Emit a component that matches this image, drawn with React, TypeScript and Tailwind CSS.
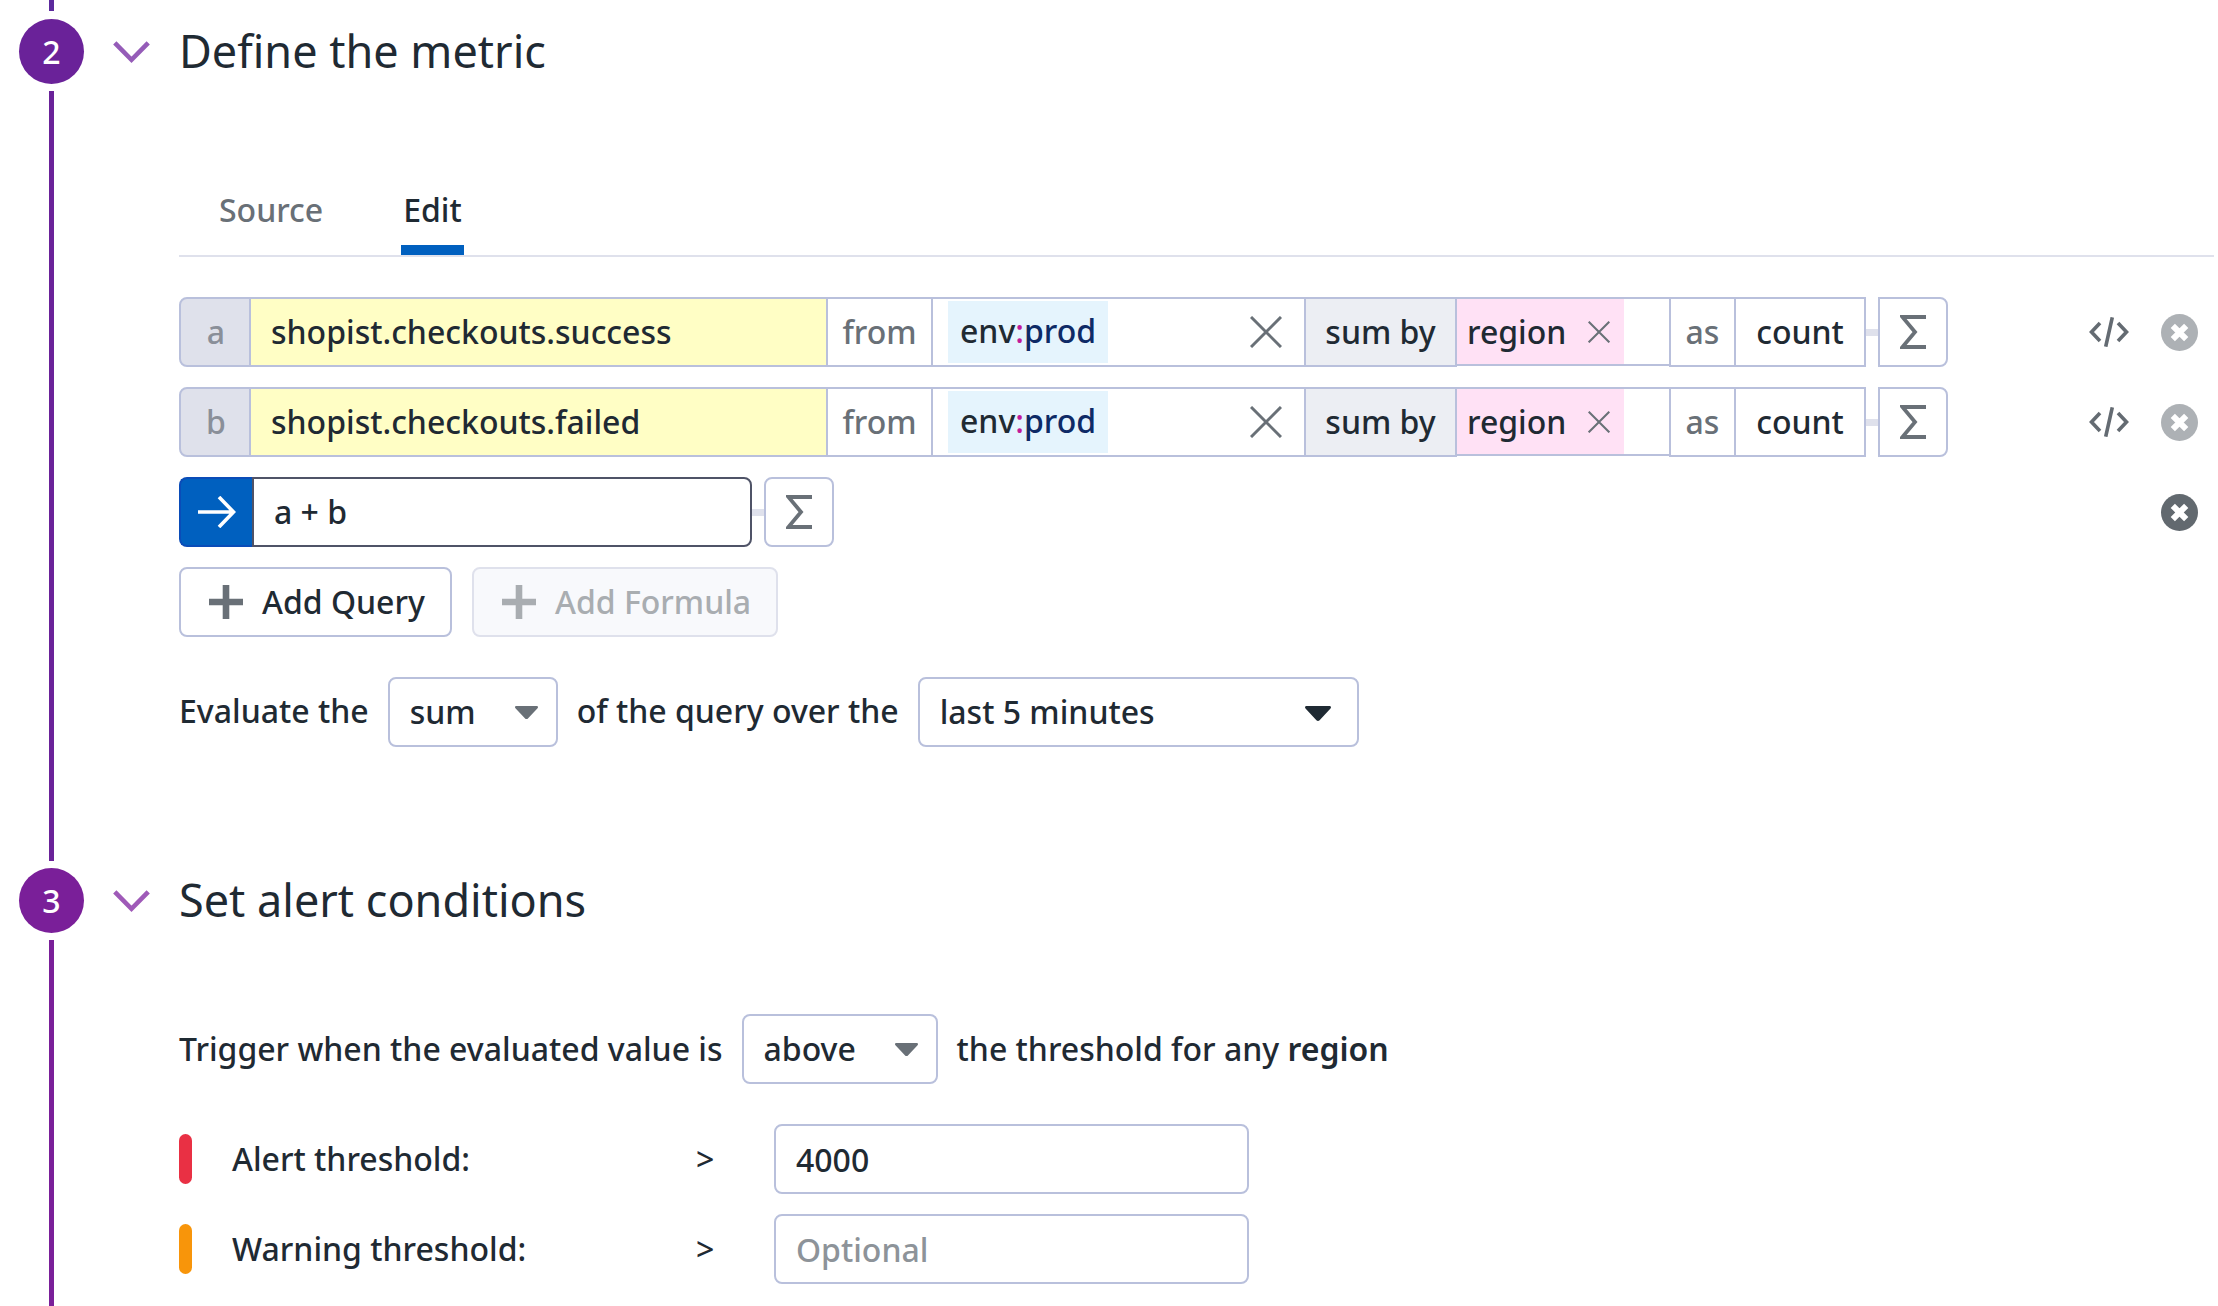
import React, { useState } from "react";

const CELL = "flex h-[70px] shrink-0 items-center border-2 border-[#b9c0dc] bg-white";

function Chevron({ className }: { className: string }) {
  return (
    <svg width="37" height="23" viewBox="0 0 37 23" fill="none" className={className} aria-hidden="true">
      <path d="M1.8 1.8 18.5 18.8 35.2 1.8" stroke="currentColor" strokeWidth="4.6" />
    </svg>
  );
}

function Sigma() {
  return (
    <svg width="26" height="34" viewBox="0 0 26 34" fill="none" aria-hidden="true">
      <path d="M26 2H2.400L15 17 2.400 32H26" stroke="#697077" strokeWidth="3.800" />
    </svg>
  );
}

function Cross({ size, width }: { size: number; width: number }) {
  return (
    <svg width={size} height={size} viewBox="0 0 32 32" fill="none" aria-hidden="true">
      <path d="M1 1 31 31M31 1 1 31" stroke="#697077" strokeWidth={width} />
    </svg>
  );
}

function Plus() {
  return (
    <svg width="34" height="34" viewBox="0 0 34 34" aria-hidden="true">
      <path d="M13.7 0h6.6v13.7H34v6.6H20.3V34h-6.6V20.3H0v-6.6h13.7z" fill="currentColor" />
    </svg>
  );
}

function Caret({ className, width }: { className: string; width: number }) {
  return (
    <svg width={width} viewBox="0 0 26 15" className={className} aria-hidden="true">
      <path d="M1.6 0h22.8c1.5 0 2.1 1.4 1.1 2.5L14.6 14.2c-.9 1-2.3 1-3.2 0L.5 2.500C-.5 1.400.100 0 1.600 0z" fill="currentColor" />
    </svg>
  );
}

function RemoveButton({ label, className }: { label: string; className: string }) {
  return (
    <button type="button" aria-label={label} className={className}>
      <svg width="37" height="37" viewBox="0 0 37 37" aria-hidden="true">
        <circle cx="18.5" cy="18.5" r="18.5" fill="currentColor" />
        <path d="M11.800 11.800 25.200 25.200M25.200 11.800 11.800 25.200" stroke="#fff" strokeWidth="6" />
      </svg>
    </button>
  );
}

function CodeIcon() {
  return (
    <svg width="40" height="30" viewBox="0 0 40 30" fill="none" stroke="#646b72" strokeWidth="3.600" aria-hidden="true">
      <path d="M11 6 2.500 15 11 24M29 6 37.500 15 29 24M23.300.300 16.700 29.700" />
    </svg>
  );
}

function Connector() {
  return <span className="h-[7px] w-3 shrink-0 bg-[#dfe1ec]" />;
}

function SelectBox(props: {
  label: string;
  options: string[];
  className: string;
  caretClass: string;
  caretWidth: number;
}) {
  return (
    <div className={`relative ${props.className}`}>
      <select
        aria-label={props.label}
        className="h-[70px] w-full appearance-none rounded-lg border-2 border-[#b9c0dc] bg-white pl-5 pr-14"
      >
        {props.options.map((o) => (
          <option key={o}>{o}</option>
        ))}
      </select>
      <Caret className={`pointer-events-none absolute top-[29px] ${props.caretClass}`} width={props.caretWidth} />
    </div>
  );
}

function QueryRow({ id, metric }: { id: string; metric: string }) {
  const [value, setValue] = useState(metric);
  return (
    <div className="flex items-center">
      <span className="flex h-[70px] w-[72px] shrink-0 items-center justify-center rounded-l-lg border-2 border-[#b9c0dc] bg-[#dfe1eb] pl-0.5 text-[#8a8f99]">
        {id}
      </span>
      <input
        aria-label={`Metric ${id}`}
        value={value}
        onChange={(e) => setValue(e.target.value)}
        className="h-[70px] w-[575px] shrink-0 border-y-2 border-[#b9c0dc] bg-[#fffec5] pb-0.5 pl-5"
      />
      <span className={`${CELL} w-[107px] justify-center text-[#697077]`}>from</span>
      <div className={`${CELL} w-[373px] justify-between border-l-0 pr-[22px] pl-[15px]`}>
        <span className="flex h-[62px] items-center bg-[#e5f4fd] px-3 pb-0.5">
          env<span className="text-[#c2189b]">:</span>
          <span className="text-[#0e2a66]">prod</span>
        </span>
        <button type="button" aria-label={`Clear filter ${id}`}>
          <Cross size={32} width={3} />
        </button>
      </div>
      <button type="button" className="h-[70px] w-[151px] shrink-0 border-y-2 border-r-2 border-[#b9c0dc] bg-[#eceef3]">
        sum by
      </button>
      <div className="flex h-[69px] w-[212px] shrink-0 self-start border-y-2 border-[#b9c0dc]">
        <span className="flex w-[167px] items-center justify-between bg-[#ffe1f5] pr-[14px] pl-[10px]">
          region
          <button type="button" aria-label={`Remove region ${id}`}>
            <Cross size={22} width={3} />
          </button>
        </span>
      </div>
      <span className={`${CELL} w-[67px] justify-center text-[#697077]`}>as</span>
      <button type="button" className={`${CELL} w-[130px] justify-center border-l-0`}>
        count
      </button>
      <Connector />
      <button type="button" aria-label={`Add function ${id}`} className={`${CELL} w-[70px] justify-center rounded-r-lg`}>
        <Sigma />
      </button>
      <div className="ml-auto flex items-center gap-8 pr-4">
        <button type="button" aria-label={`Show code ${id}`}>
          <CodeIcon />
        </button>
        <RemoveButton label={`Remove query ${id}`} className="text-[#adb1b5]" />
      </div>
    </div>
  );
}

function ThresholdRow(props: { id: string; label: string; bar: string; value?: string; placeholder?: string }) {
  return (
    <div className="flex items-center">
      <span className={`h-[50px] w-[13px] shrink-0 rounded-full ${props.bar}`} />
      <label htmlFor={props.id} className="ml-10 w-[464px] shrink-0">
        {props.label}
      </label>
      <span className="w-[78px] shrink-0">&gt;</span>
      <input
        id={props.id}
        defaultValue={props.value}
        placeholder={props.placeholder}
        className="h-[70px] w-[475px] rounded-lg border-2 border-[#b9c0dc] bg-white px-5 placeholder:text-[#8d9399]"
      />
    </div>
  );
}

function Step(props: {
  number: number;
  title: string;
  circle: string;
  line: string;
  chevron: string;
  lead?: React.ReactNode;
  className: string;
  children: React.ReactNode;
}) {
  return (
    <section className={`flex ${props.className}`}>
      <div className="flex w-[103px] shrink-0 flex-col items-center">
        {props.lead}
        <div className={`flex h-[65px] w-[65px] shrink-0 items-center justify-center rounded-full text-white ${props.circle}`}>
          {props.number}
        </div>
        <div className={`mt-[7px] w-[5px] flex-1 ${props.line}`} />
      </div>
      <div className="min-w-0 flex-1">
        {props.lead && <div className="h-[19px]" />}
        <div className="flex h-[65px] items-center">
          <button type="button" aria-label={`Collapse ${props.title}`} className="w-[76px] pt-0.5 pl-2.5">
            <Chevron className={props.chevron} />
          </button>
          <h2 className="pb-0.5 text-[45px] leading-[60px] font-normal">{props.title}</h2>
        </div>
        <div className="pr-1 pl-[76px]">{props.children}</div>
      </div>
    </section>
  );
}

export default function App() {
  const [formula, setFormula] = useState("a + b");
  return (
    <main className="flex min-h-screen flex-col bg-white font-['Noto_Sans',sans-serif] text-[32px] leading-[44px] font-medium whitespace-nowrap text-[#1f2a33]">
      <Step
        number={2}
        title="Define the metric"
        circle="bg-[#6a2299]"
        line="bg-[#6a2299]"
        chevron="text-[#955cb8]"
        lead={<div className="mb-2 h-[11px] w-[5px] bg-[#5c2a9d]" />}
        className=""
      >
        <nav className="mt-[104px] flex gap-[78px] border-b-2 border-[#dfe1ec] pl-10">
          <button type="button" className="border-b-[10px] border-transparent pb-[13px] text-[#697077]">
            Source
          </button>
          <button type="button" className="border-b-[10px] border-[#0060bf] px-0.5 pb-[13px]">
            Edit
          </button>
        </nav>
        <div className="mt-10 flex flex-col gap-5">
          <QueryRow id="a" metric="shopist.checkouts.success" />
          <QueryRow id="b" metric="shopist.checkouts.failed" />
          <div className="flex items-center">
            <button
              type="button"
              aria-label="Apply formula"
              className="flex h-[70px] w-[73px] shrink-0 items-center justify-center rounded-l-lg border-y-2 border-l-2 border-[#0a4cb8] bg-[#0060bf]"
            >
              <svg width="38" height="32" viewBox="0 0 38 32" fill="none" stroke="#fff" strokeWidth="3.600" aria-hidden="true">
                <path d="M0 16H36M21 1 35.500 16 21 31" />
              </svg>
            </button>
            <input
              aria-label="Formula"
              value={formula}
              onChange={(e) => setFormula(e.target.value)}
              className="h-[70px] w-[500px] rounded-r-lg border-2 border-[#4f5367] bg-white pb-0.5 pl-5"
            />
            <Connector />
            <button type="button" aria-label="Add function to formula" className={`${CELL} w-[70px] justify-center rounded-lg`}>
              <Sigma />
            </button>
            <div className="ml-auto flex pr-4">
              <RemoveButton label="Remove formula" className="text-[#62696f]" />
            </div>
          </div>
          <div className="flex gap-5">
            <button
              type="button"
              className="flex h-[70px] items-center gap-[19px] rounded-lg border-2 border-[#b9c0dc] bg-white pr-[25px] pl-7"
            >
              <span className="text-[#697077]">
                <Plus />
              </span>
              Add Query
            </button>
            <button
              type="button"
              disabled
              className="flex h-[70px] items-center gap-[19px] rounded-lg border-2 border-[#dfe1ec] bg-[#f8f9fc] pr-[25px] pl-7 text-[#a9adb1]"
            >
              <Plus />
              Add Formula
            </button>
          </div>
        </div>
        <div className="mt-10 mb-[114px] flex items-center gap-[19px]">
          <span className="pb-0.5">Evaluate the</span>
          <SelectBox
            label="Aggregation"
            options={["sum", "avg", "max", "min"]}
            className="w-[170px]"
            caretClass="right-5 text-[#697077]"
            caretWidth={23}
          />
          <span className="pb-0.5">of the query over the</span>
          <SelectBox
            label="Evaluation window"
            options={["last 5 minutes", "last 10 minutes", "last 15 minutes"]}
            className="w-[441px]"
            caretClass="right-7 text-[#1f2a33]"
            caretWidth={26}
          />
        </div>
      </Step>
      <Step
        number={3}
        title="Set alert conditions"
        circle="bg-[#7a1f99]"
        line="bg-[#7a1f99]"
        chevron="text-[#9f5ab8]"
        className="flex-1 pt-[7px]"
      >
        <div className="mt-[81px] flex items-center gap-[19px]">
          <span>Trigger when the evaluated value is</span>
          <SelectBox
            label="Comparison"
            options={["above", "below"]}
            className="w-[196px]"
            caretClass="right-5 text-[#697077]"
            caretWidth={23}
          />
          <span>
            the threshold for any <b className="font-semibold">region</b>
          </span>
        </div>
        <div className="mt-10 flex flex-col gap-5">
          <ThresholdRow id="alert" label="Alert threshold:" bar="bg-[#e93044]" value="4000" />
          <ThresholdRow id="warning" label="Warning threshold:" bar="bg-[#f8950a]" placeholder="Optional" />
        </div>
      </Step>
    </main>
  );
}
